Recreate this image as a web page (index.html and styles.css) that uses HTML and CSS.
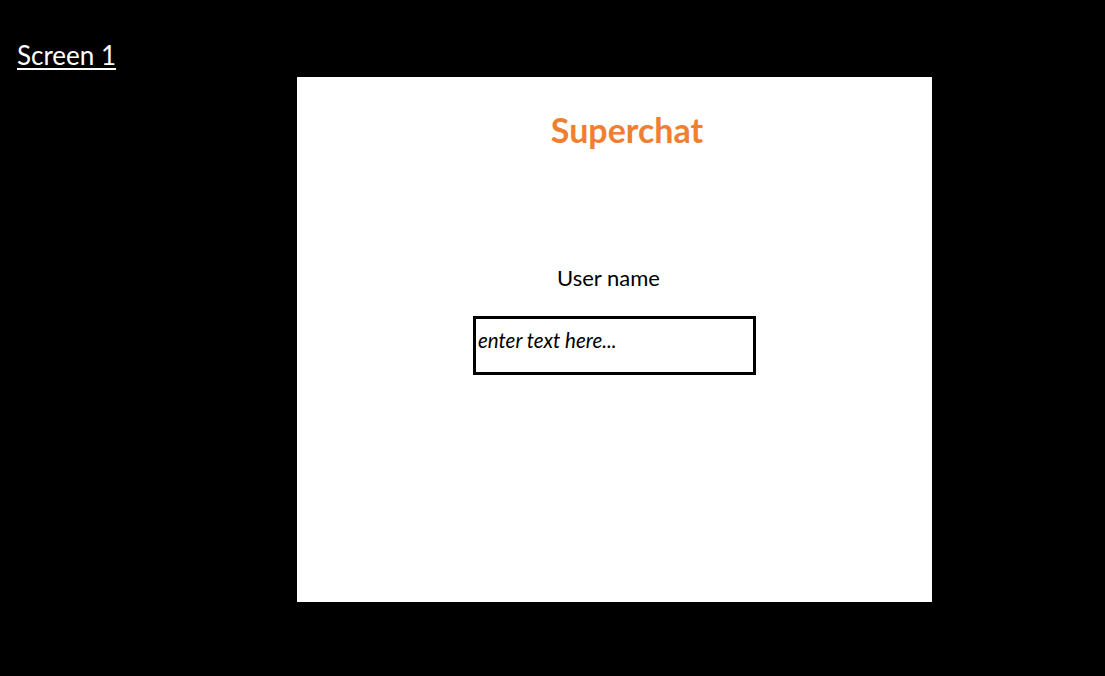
FILE: index.html
```html
<!DOCTYPE html>
<html>
<head>
<meta charset="utf-8">
<link rel="stylesheet" href="styles.css">
</head>
<body>
<div class="page">
  <div class="screen-label">Screen 1</div>
  <div class="panel">
    <h1 class="title">Superchat</h1>
    <label class="field-label" for="user">User name</label>
    <div class="input-box">
      <input id="user" class="input" type="text" placeholder="enter text here...">
    </div>
  </div>
</div>
</body>
</html>
```
FILE: styles.css
```css
html, body {
  margin: 0;
  padding: 0;
  background: #000;
  width: 1105px;
  height: 676px;
  overflow: hidden;
  font-family: Lato, "Open Sans", sans-serif;
}
.page {
  display: flex;
  flex-direction: column;
  padding-top: 40px;
}
.screen-label {
  color: #fff;
  font-size: 26px;
  line-height: 30px;
  padding-left: 17px;
  text-decoration: underline;
  text-underline-offset: 3px;
  text-decoration-thickness: 2px;
  height: 37px;
}
.panel {
  margin-left: 297px;
  width: 635px;
  height: 525px;
  background: #fff;
  display: flex;
  flex-direction: column;
  align-items: center;
  box-sizing: border-box;
  padding-top: 33px;
}
.title {
  margin: 0;
  color: #EF7F31;
  font-size: 34px;
  font-weight: 700;
  line-height: 40px;
  padding-left: 25px;
}
.field-label {
  margin-top: 116px;
  color: #000;
  font-size: 22px;
  line-height: 24px;
  padding-right: 12px;
}
.input-box {
  margin-top: 26px;
  width: 283px;
  height: 59px;
  box-sizing: border-box;
  border: 3px solid #000;
  display: flex;
  align-items: flex-start;
}
.input {
  border: none;
  outline: none;
  background: transparent;
  padding: 9px 0 0 2px;
  margin: 0;
  width: 100%;
  font-family: Lato, "Open Sans", sans-serif;
  font-size: 20.5px;
  font-style: italic;
  color: #000;
}
.input::placeholder {
  color: #000;
  opacity: 1;
  font-style: italic;
}
```
